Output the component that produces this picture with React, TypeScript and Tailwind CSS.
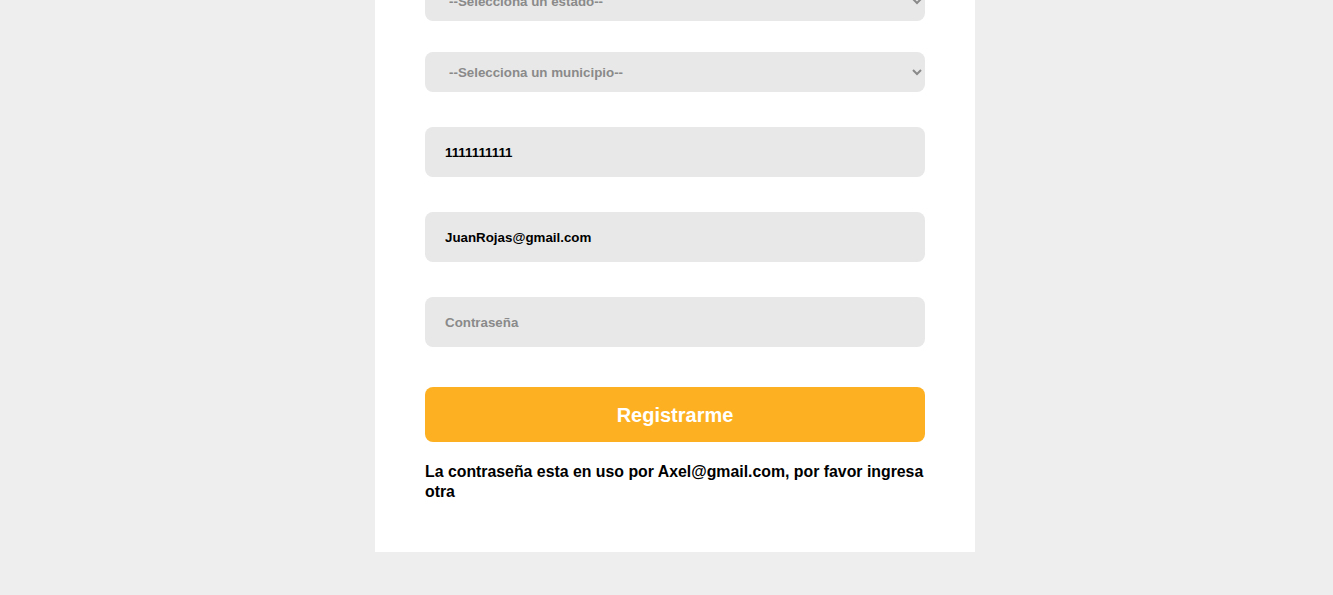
import React from 'react';

const field =
  'w-full rounded-lg bg-[#e8e8e8] px-5 text-[13.33px] font-bold outline-none placeholder:text-[#8a8a8a]';

export default function App() {
  return (
    <div className="flex h-screen flex-col overflow-hidden bg-[#eeeeee] pl-[17px] font-['Liberation_Sans',Arial,sans-serif]">
      <div className="mx-auto -mt-[19px] flex w-[600px] flex-col bg-white px-[50px] pb-[50px]">
        <select className={`${field} h-10 text-[#8a8a8a]`} defaultValue="">
          <option value="">--Selecciona un estado--</option>
        </select>
        <select className={`${field} mt-[31px] h-10 text-[#8a8a8a]`} defaultValue="">
          <option value="">--Selecciona un municipio--</option>
        </select>
        <input className={`${field} mt-[35px] h-[50px] text-black`} defaultValue="1111111111" />
        <input className={`${field} mt-[35px] h-[50px] text-black`} defaultValue="JuanRojas@gmail.com" />
        <input className={`${field} mt-[35px] h-[50px] text-black`} type="password" placeholder="Contraseña" />
        <button className="mt-10 h-[55px] w-full rounded-lg bg-[#fdb122] text-[20px] font-bold text-white">
          Registrarme
        </button>
        <p className="mt-5 text-[15.85px] leading-5 font-bold text-black">
          La contraseña esta en uso por Axel@gmail.com, por favor ingresa otra
        </p>
      </div>
    </div>
  );
}
